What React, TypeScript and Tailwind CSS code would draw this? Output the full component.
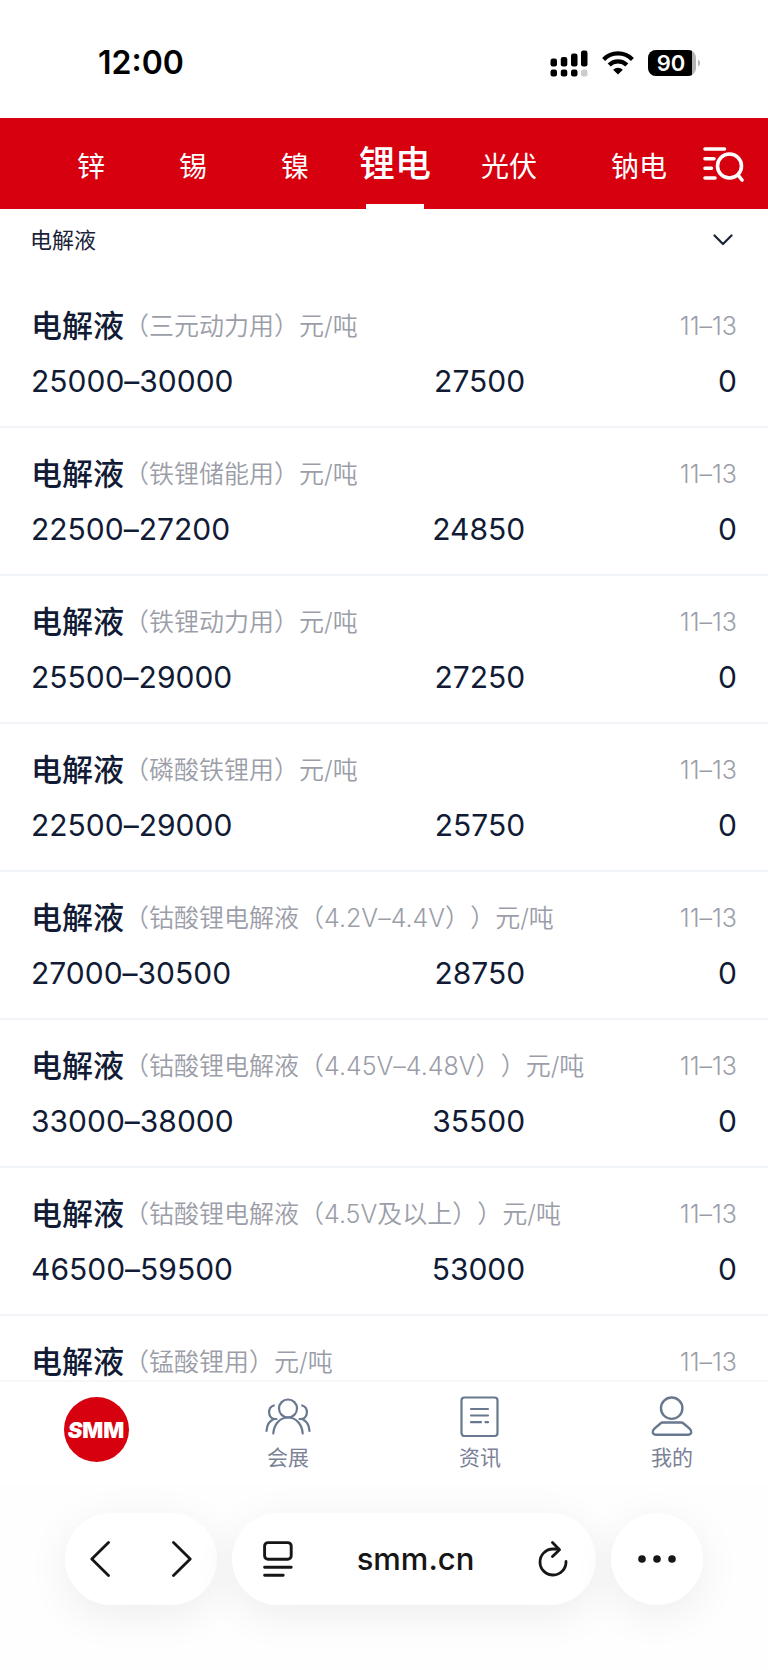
import React, { useState } from 'react';
import clsx from 'clsx';

type Quote = {
	id: number;
	spec: string;
	range: string;
	average: string;
	change: string;
	date: string;
};

const metals = ['锌', '锡', '镍', '锂电', '光伏', '钠电'];

const quotes: Quote[] = [
	{ id: 1, spec: '三元动力用', range: '25000–30000', average: '27500', change: '0', date: '11–13' },
	{ id: 2, spec: '铁锂储能用', range: '22500–27200', average: '24850', change: '0', date: '11–13' },
	{ id: 3, spec: '铁锂动力用', range: '25500–29000', average: '27250', change: '0', date: '11–13' },
	{ id: 4, spec: '磷酸铁锂用', range: '22500–29000', average: '25750', change: '0', date: '11–13' },
	{ id: 5, spec: '钴酸锂电解液（4.2V–4.4V）', range: '27000–30500', average: '28750', change: '0', date: '11–13' },
	{ id: 6, spec: '钴酸锂电解液（4.45V–4.48V）', range: '33000–38000', average: '35500', change: '0', date: '11–13' },
	{ id: 7, spec: '钴酸锂电解液（4.5V及以上）', range: '46500–59500', average: '53000', change: '0', date: '11–13' },
	{ id: 8, spec: '锰酸锂用', range: '', average: '', change: '', date: '11–13' },
];

function StatusBar() {
	return (
		<div className="flex h-[118px] shrink-0 items-center justify-between pt-2 pr-[67px] pl-[98px] text-black">
			<span className="text-[32px] leading-10 font-semibold">12:00</span>
			<div className="flex items-center">
				<svg width="38" height="27" viewBox="0 0 38 27" fill="currentColor">
					<rect x="0.5" y="8.5" width="6.5" height="8" rx="2.2" />
					<rect x="10.8" y="7" width="6.5" height="9.5" rx="2.2" />
					<rect x="21" y="3.5" width="6.5" height="13" rx="2.2" />
					<rect x="31" y="0.5" width="6.5" height="16" rx="2.2" />
					<rect x="0.5" y="19.5" width="6.5" height="7" rx="2.2" />
					<rect x="10.8" y="19.5" width="6.5" height="7" rx="2.2" />
					<rect x="21" y="19.5" width="6.5" height="7" rx="2.2" />
					<rect x="31" y="19.5" width="6.5" height="7" rx="2.2" fill="#cccccc" />
				</svg>
				<svg className="ml-3.5" width="32" height="24" viewBox="0 0 32 24" fill="none" stroke="currentColor" strokeWidth="4.2">
					<path d="M1.6 8.4a20.3 20.3 0 0 1 28.8 0" />
					<path d="M7.2 14a12.4 12.4 0 0 1 17.6 0" />
					<path d="M16 23.6l-4.9-4.9a7 7 0 0 1 9.8 0z" fill="currentColor" stroke="none" />
				</svg>
				<div className="ml-3.5 flex h-[26px] w-12 overflow-hidden rounded-lg bg-[#b5b5b5]">
					<span className="w-11 bg-black pl-0.5 text-center text-[22px] leading-[26px] font-semibold text-white">90</span>
				</div>
				<svg className="ml-0.5" width="3" height="8" viewBox="0 0 3 8" fill="#b5b5b5">
					<path d="M0 0.5a4 4 0 0 1 0 7z" />
				</svg>
			</div>
		</div>
	);
}

function MetalTabs() {
	const [active, setActive] = useState('锂电');

	return (
		<nav className="flex h-[91px] shrink-0 bg-[#d7000f] text-white">
			<div className="flex min-w-0 flex-1 overflow-hidden pl-10">
				{metals.map((item) => (
					<button
						key={item}
						onClick={() => setActive(item)}
						className={clsx(
							'flex shrink-0 flex-col items-center justify-between',
							item === active ? 'px-[13px] text-[36px] font-medium' : 'px-[37px] text-[28px]',
						)}
					>
						<span className={clsx('leading-10', item === active ? 'pt-[26px]' : 'pt-[29px]')}>{item}</span>
						{item === active && <span className="h-[5px] w-[58px] bg-white" />}
					</button>
				))}
			</div>
			<button aria-label="搜索" className="mr-6 shrink-0">
				<svg width="41" height="36" viewBox="0 0 41 36" fill="none" stroke="currentColor" strokeWidth="3.6" strokeLinecap="round">
					<path d="M2 3h19.500M2 12.8h9M2 22.3h6.5M2 32h10" />
					<circle cx="26.5" cy="20" r="12" />
					<path d="M35 29l4 5" />
				</svg>
			</button>
		</nav>
	);
}

function CategorySelect() {
	return (
		<div className="grid h-[61px] shrink-0 items-center px-[30px] text-[#1a2238]">
			<select
				aria-label="品种"
				className="w-full appearance-none bg-transparent text-[22px] leading-8 outline-none [grid-area:1/1]"
			>
				<option>电解液</option>
			</select>
			<svg
				className="pointer-events-none mr-[5px] justify-self-end [grid-area:1/1]"
				width="20"
				height="12"
				viewBox="0 0 20 12"
				fill="none"
				stroke="currentColor"
				strokeWidth="2.2"
				strokeLinecap="round"
				strokeLinejoin="round"
			>
				<path d="M1.5 1.5L10 10l8.500-8.500" />
			</svg>
		</div>
	);
}

function QuoteRow({ item }: { item: Quote }) {
	return (
		<li className="border-b-2 border-[#f1f5fa] px-[31px] pt-7 pb-[27px] [font-feature-settings:'calt'_0]">
			<div className="flex items-center leading-9 text-[#9b9ea8]">
				<h3 className="text-[31px] font-medium text-[#111b35]">电解液</h3>
				<p className="flex-1 text-[25px] font-[350] whitespace-nowrap [text-spacing-trim:space-all]">
					（{item.spec}）元/吨
				</p>
				<span className="text-[25px] font-[350]">{item.date}</span>
			</div>
			<div className="mt-[19px] grid grid-cols-10 text-[30px] leading-9 font-[370] text-[#111b35]">
				<span className="col-span-4">{item.range}</span>
				<span className="col-span-3 text-right">{item.average}</span>
				<span className="col-span-3 text-right">{item.change}</span>
			</div>
		</li>
	);
}

function BottomNav() {
	return (
		<nav className="grid h-[104px] shrink-0 grid-cols-4 border-t-2 border-[#f7f7f8] text-[21px] leading-7 text-[#7b8197]">
			<a href="#home" className="flex justify-center pt-[15px]">
				<span className="flex size-[65px] items-center justify-center rounded-full bg-[#d7000f] text-[22px] font-black text-white">
					<i>S</i>MM
				</span>
			</a>
			<a href="#expo" className="flex flex-col items-center gap-1 pt-3.5">
				<svg width="46" height="44" viewBox="0 0 46 44" fill="none" stroke="#68788f" strokeWidth="2.2" strokeLinecap="round">
					<circle cx="23" cy="12.500" r="9" />
					<path d="M8.300 37.500C9 28 15 21.500 23 21.500S37 28 37.700 37.500" />
					<path d="M8.800 9.500C2.500 11.500 2.500 21 9 23h2.500M9 23C4 25 1.800 29.500 1.500 35" />
					<path d="M37.200 9.500C43.500 11.500 43.500 21 37 23h-2.500M37 23c5 2 7.200 6.500 7.500 12" />
				</svg>
				<span>会展</span>
			</a>
			<a href="#news" className="flex flex-col items-center gap-1 pt-3.5">
				<svg width="46" height="44" viewBox="0 0 46 44" fill="none" stroke="#68788f" strokeWidth="2.2" strokeLinecap="round">
					<rect x="4.500" y="1.500" width="36" height="38.500" rx="3" />
					<path d="M14 13h17M14 19.500h17M14 26.200h10M28.500 26.200H31" />
				</svg>
				<span>资讯</span>
			</a>
			<a href="#mine" className="flex flex-col items-center gap-1 pt-3.5">
				<svg width="46" height="44" viewBox="0 0 46 44" fill="none" stroke="#68788f" strokeWidth="2.4" strokeLinejoin="round">
					<circle cx="22.700" cy="12.200" r="10.700" />
					<path d="M13.500 26.500h18.500q1.500 0 2.600 1l6 5.200c3 2.800 1.800 6-1.600 6H7c-3.400 0-4.600-3.200-1.600-6l6-5.200q1-1 2.100-1z" />
				</svg>
				<span>我的</span>
			</a>
		</nav>
	);
}

function BrowserBar() {
	return (
		<div className="flex h-[186px] shrink-0 items-start gap-[15px] bg-[#fefefe] px-[65px] pt-[29px] text-[#161616]">
			<div className="flex h-[92px] w-[152px] items-center justify-between rounded-full bg-white px-[25px] shadow-[0_10px_44px_rgba(0,0,0,0.07)]">
				<button aria-label="后退">
					<svg width="22" height="36" viewBox="0 0 22 36" fill="none" stroke="currentColor" strokeWidth="2.800" strokeLinecap="round" strokeLinejoin="round">
						<path d="M18.500 1.500L1.800 18l16.700 16.500" />
					</svg>
				</button>
				<button aria-label="前进">
					<svg width="22" height="36" viewBox="0 0 22 36" fill="none" stroke="currentColor" strokeWidth="2.800" strokeLinecap="round" strokeLinejoin="round">
						<path d="M3.500 1.500L20.200 18 3.500 34.500" />
					</svg>
				</button>
			</div>
			<div className="flex h-[92px] flex-1 items-center justify-between rounded-full bg-white pr-7 pl-[31px] shadow-[0_10px_44px_rgba(0,0,0,0.07)]">
				<button aria-label="页面菜单">
					<svg width="30" height="36" viewBox="0 0 30 36" fill="none" stroke="currentColor" strokeWidth="2.900" strokeLinecap="round">
						<rect x="1.600" y="1.600" width="26.600" height="16.600" rx="3.500" />
						<path d="M1.600 26.200h26.600M1.600 34.300h18.600" />
					</svg>
				</button>
				<button className="text-[31px] leading-10 font-medium">smm.cn</button>
				<button aria-label="刷新">
					<svg width="30" height="36" viewBox="0 0 30 36" fill="none" stroke="currentColor" strokeWidth="2.800" strokeLinecap="round" strokeLinejoin="round">
						<path d="M28 20.500A13 13 0 1 1 15 8h5.500" />
						<path d="M14.500 1.500l7 7.200-7 6.800" />
					</svg>
				</button>
			</div>
			<button
				aria-label="更多"
				className="flex size-[92px] items-center justify-center rounded-full bg-white shadow-[0_10px_44px_rgba(0,0,0,0.07)]"
			>
				<svg width="38" height="8" viewBox="0 0 38 8" fill="currentColor">
					<circle cx="4" cy="4" r="3.800" />
					<circle cx="19" cy="4" r="3.800" />
					<circle cx="34" cy="4" r="3.800" />
				</svg>
			</button>
		</div>
	);
}

export default function App() {
	return (
		<div lang="zh-CN" className="flex h-screen flex-col overflow-hidden bg-white font-['Inter','Noto_Sans_CJK_SC',sans-serif]">
			<StatusBar />
			<MetalTabs />
			<CategorySelect />
			<ul className="mt-2.5 min-h-0 flex-1 overflow-hidden">
				{quotes.map((item) => (
					<QuoteRow key={item.id} item={item} />
				))}
			</ul>
			<BottomNav />
			<BrowserBar />
		</div>
	);
}
